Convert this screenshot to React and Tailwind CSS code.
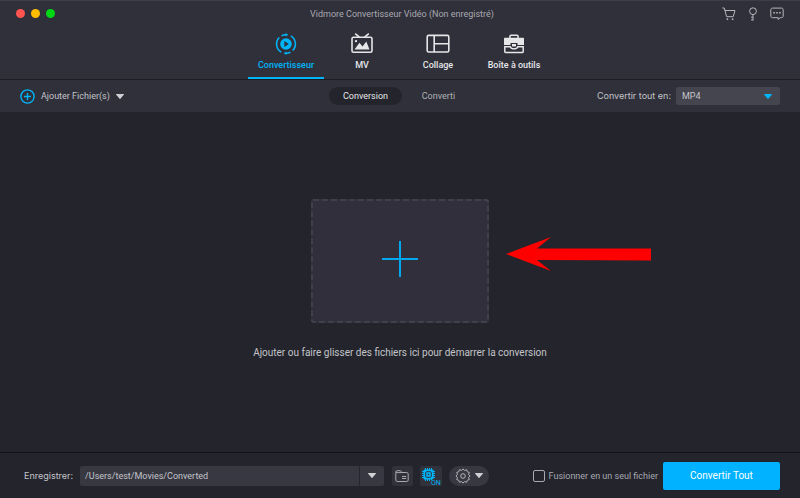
import { useState } from 'react'

function CartIcon() {
  return (
    <svg className="h-[14px] w-[14px]" viewBox="0 0 14 14" fill="none" stroke="currentColor" strokeLinecap="round" strokeLinejoin="round">
      <path d="M.7 1h1.600l2.300 8.700h6.600l1.800-6.200H3" />
      <circle cx="5.400" cy="12.200" r=".9" fill="currentColor" stroke="none" />
      <circle cx="10.600" cy="12.200" r=".9" fill="currentColor" stroke="none" />
    </svg>
  )
}

function KeyIcon() {
  return (
    <svg className="h-[14px] w-[10px]" viewBox="0 0 10 14" fill="none" stroke="currentColor">
      <circle cx="5" cy="4.200" r="3.400" />
      <path d="M5 7.600v6M5 10.200H3M5 12.900H3" />
    </svg>
  )
}

function MessageIcon() {
  return (
    <svg className="h-[14px] w-[14px]" viewBox="0 0 14 14" fill="none" stroke="currentColor">
      <path d="M2.400 1.100h9.200c.9 0 1.600.7 1.600 1.600v6.400c0 .9-.7 1.600-1.600 1.600h-1.300l-2.100 1.700v-1.700H2.400C1.500 10.700.8 10 .8 9.100V2.700c0-.9.7-1.600 1.600-1.600z" />
      <path d="M3.300 5.800h1.600M6.200 5.800h1.600M9.100 5.800h1.600" strokeWidth="1.600" />
    </svg>
  )
}

function ConvertIcon() {
  return (
    <svg className="h-[22px] w-[22px]" viewBox="0 0 22 22" fill="none" stroke="currentColor" strokeWidth="1.600">
      <path d="M4.300 4.500A9.300 9.300 0 0 0 6.200 19.100" />
      <path d="M15.800 2.900A9.300 9.300 0 0 1 17.700 17.500" />
      <path d="M6.600 2.700A9.300 9.300 0 0 1 11.500 1.700M15.400 19.300A9.300 9.300 0 0 1 10.500 20.300" />
      <path d="M10.600 0l2.700 1.800-2.700 1.800zM11.400 18.400l-2.700 1.800 2.700 1.800z" fill="currentColor" stroke="none" />
      <circle cx="11" cy="11" r="5.800" fill="currentColor" stroke="none" />
      <path d="M9.300 8.100v5.800l4.600-2.900z" fill="#2f303a" stroke="none" />
    </svg>
  )
}

function TvIcon() {
  return (
    <svg className="h-[22px] w-[22px]" viewBox="0 0 22 22" fill="none" stroke="currentColor" strokeWidth="1.600">
      <path d="M4.200 .6l4.200 3.600M17.800 .6l-4.200 3.600" />
      <rect x="1" y="4.200" width="20" height="15" rx="1.500" />
      <path d="M3.500 16.500l5-6.700 3 3.700 3.800-5.100 3.200 8.100z" fill="currentColor" stroke="none" />
      <circle cx="5" cy="8.100" r="1.200" fill="currentColor" stroke="none" />
    </svg>
  )
}

function CollageIcon() {
  return (
    <svg className="h-[22px] w-[24px]" viewBox="0 0 24 22" fill="none" stroke="currentColor" strokeWidth="1.600">
      <rect x="1.200" y="2.400" width="21.600" height="16.600" rx="1.500" />
      <path d="M8.200 2.400V19M8.200 10.700h14.600" />
    </svg>
  )
}

function ToolboxIcon() {
  return (
    <svg className="h-[22px] w-[22px]" viewBox="0 0 22 22" fill="currentColor">
      <path d="M6.900 5V3.400c0-.7.500-1.200 1.200-1.200h5.800c.7 0 1.200.5 1.200 1.200V5" fill="none" stroke="currentColor" strokeWidth="1.500" />
      <path d="M2 4.800h18c.6 0 1 .4 1 1v6.200h-6.500V10H7.500v2H1V5.800c0-.6.400-1 1-1z" />
      <path d="M9 11h4v1.700c0 .5-.4.900-.9.900H9.900c-.5 0-.9-.4-.9-.9z" />
      <path d="M1.800 13.800v5c0 .4.300.7.700.7h17c.4 0 .7-.3.700-.7v-5h-5.500c-.3 1.200-1.200 1.900-2.300 1.900H9.600c-1.100 0-2-.7-2.300-1.900z" fill="none" stroke="currentColor" strokeWidth="1.500" />
    </svg>
  )
}

function FolderIcon() {
  return (
    <svg className="h-[14px] w-[14px]" viewBox="0 0 14 14" fill="none" stroke="currentColor">
      <path d="M.8 3.600V3c0-.8.500-1.300 1.300-1.300h3c.5 0 .8.200 1 .6l.6 1.200h5.100c.8 0 1.400.6 1.400 1.400v6.200c0 .8-.6 1.400-1.400 1.400H2.200c-.8 0-1.400-.6-1.400-1.400z" />
      <path d="M1 3.600h6M7 7.500h4.200M7 9.500h4.200" />
    </svg>
  )
}

function ChipIcon() {
  return (
    <svg className="h-[20px] w-[20px]" viewBox="0 0 20 20" fill="none" stroke="currentColor">
      <path d="M4.500 2v13M6.500 2v13M8.500 2v13M10.500 2v13M1 5.500h13M1 7.500h13M1 9.500h13M1 11.500h13" />
      <rect x="2.500" y="3.500" width="10" height="10" rx="1" fill="currentColor" stroke="none" />
      <rect x="4.700" y="5.700" width="5.600" height="5.600" rx="1" stroke="#31323c" />
      <rect x="6.800" y="7.800" width="1.400" height="1.400" fill="#31323c" stroke="none" />
      <text x="10" y="18.500" fill="currentColor" stroke="#31323c" strokeWidth="1" paintOrder="stroke" fontSize="7" fontFamily="Roboto, sans-serif">ON</text>
    </svg>
  )
}

function GearIcon() {
  return (
    <svg className="h-[16px] w-[16px]" viewBox="0 0 16 16" fill="none" stroke="currentColor" strokeLinejoin="round">
      <path d="M8 .9l1.500 1.600 2-.8.8 2 2 .8-.8 2L15.100 8l-1.600 1.500.8 2-2 .8-.8 2-2-.8L8 15.100l-1.500-1.600-2 .8-.8-2-2-.8.8-2L.9 8l1.600-1.500-.8-2 2-.8.8-2 2 .8z" />
      <circle cx="8" cy="8" r="2.300" />
    </svg>
  )
}

function Caret({ className }) {
  return (
    <svg className={`h-[5px] w-[8px] ${className}`} viewBox="0 0 8 5" fill="currentColor">
      <path d="M.5 0h7c.4 0 .6.400.3.700L4.400 4.700c-.2.300-.6.300-.8 0L.2.700C-.1.400.1 0 .5 0z" />
    </svg>
  )
}

const tabs = [
  { id: 'convert', label: 'Convertisseur', icon: ConvertIcon },
  { id: 'mv', label: 'MV', icon: TvIcon },
  { id: 'collage', label: 'Collage', icon: CollageIcon },
  { id: 'toolbox', label: 'Boîte à outils', icon: ToolboxIcon }
]

const views = [
  { id: 'conversion', label: 'Conversion' },
  { id: 'converted', label: 'Converti' }
]

export default function App() {
  const [activeTab, setActiveTab] = useState('convert')
  const [activeView, setActiveView] = useState('conversion')
  const [format, setFormat] = useState('MP4')
  const [path, setPath] = useState('/Users/test/Movies/Converted')
  const [merge, setMerge] = useState(false)

  return (
    <div className="flex min-h-screen flex-col bg-[#23242c] font-['Roboto',sans-serif] text-[9px] leading-3 text-[#c4c4c9]">
      {/* Title bar */}
      <header className="border-b border-[#1d1d24] bg-[#2f303a]">
        <div className="grid h-[26px] grid-cols-[1fr_auto_1fr] items-center border-t border-[#3c3d47] px-4">
          <div className="flex gap-[6px]">
            <span className="h-[9px] w-[9px] rounded-full bg-[#ff5450]" />
            <span className="h-[9px] w-[9px] rounded-full bg-[#ffbd00]" />
            <span className="h-[9px] w-[9px] rounded-full bg-[#00d713]" />
          </div>
          <h1 className="pl-1 text-[#a9a9b0]">Vidmore Convertisseur Vidéo (Non enregistré)</h1>
          <div className="flex items-center justify-end gap-3 text-[#b5b5bc]">
            <button aria-label="Acheter"><CartIcon /></button>
            <button aria-label="Enregistrer la licence"><KeyIcon /></button>
            <button aria-label="Commentaires"><MessageIcon /></button>
          </div>
        </div>

        {/* Main tabs */}
        <nav className="flex justify-center">
          {tabs.map((tab) => (
            <button
              key={tab.id}
              onClick={() => setActiveTab(tab.id)}
              className={`flex h-[53px] w-[76px] flex-col items-center gap-1 border-b-2 pt-[7px] font-medium whitespace-nowrap ${
                activeTab === tab.id ? 'border-[#00b4f8] text-[#00b4f8]' : 'border-transparent text-[#e6e6e9]'
              }`}
            >
              <tab.icon />
              {tab.label}
            </button>
          ))}
        </nav>
      </header>

      {/* Toolbar */}
      <div className="grid h-8 grid-cols-[1fr_auto_1fr] items-center bg-[#2f303a] px-5">
        <button className="flex items-center gap-[6px]">
          <svg className="h-[15px] w-[15px] text-[#00b4f8]" viewBox="0 0 15 15" fill="none" stroke="currentColor" strokeWidth="1.400">
            <circle cx="7.500" cy="7.500" r="6.600" />
            <path d="M7.500 4v7M4 7.500h7" />
          </svg>
          Ajouter Fichier(s)
          <Caret className="text-[#d0d0d4]" />
        </button>
        <div className="flex pl-1">
          {views.map((view) => (
            <button
              key={view.id}
              onClick={() => setActiveView(view.id)}
              className={`h-[18px] w-[73px] rounded-full ${
                activeView === view.id ? 'bg-[#23242c] text-[#e6e6e9]' : 'text-[#b0b0b6]'
              }`}
            >
              {view.label}
            </button>
          ))}
        </div>
        <div className="flex items-center justify-end gap-[5px]">
          <label htmlFor="format" className="font-['Inter',sans-serif]">Convertir tout en:</label>
          <div className="relative">
            <select
              id="format"
              value={format}
              onChange={(e) => setFormat(e.target.value)}
              className="h-[18px] w-[104px] appearance-none rounded-xs bg-[#44454f] px-[6px] text-[#c4c4c9]"
            >
              <option>MP4</option>
              <option>MOV</option>
              <option>MKV</option>
            </select>
            <Caret className="pointer-events-none absolute top-[7px] right-2 text-[#00b4f8]" />
          </div>
        </div>
      </div>

      {/* Drop area */}
      <main className="flex flex-1 flex-col items-center justify-center gap-6 pb-[6px]">
        <div className="relative">
          <button aria-label="Ajouter des fichiers" className="flex h-[124px] w-[178px] items-center justify-center rounded-xs bg-[#302f3b]">
            <svg className="h-full w-full" viewBox="0 0 178 124" fill="none">
              <rect x="1" y="1" width="176" height="122" rx="1" stroke="#51505b" strokeDasharray="6 3" />
              <path d="M89 42v36M71 60h36" stroke="#00a8f0" strokeWidth="2" />
            </svg>
          </button>
          <svg className="absolute top-[37px] left-full ml-[17px] h-[36px] w-[146px]" viewBox="0 0 146 36" fill="#ff0000">
            <path d="M0 18L45 1 31 12.500H145V24.500L31 24 45 35z" />
          </svg>
        </div>
        <p className="text-[10px]">Ajouter ou faire glisser des fichiers ici pour démarrer la conversion</p>
      </main>

      {/* Footer */}
      <footer className="flex h-[46px] items-center border-t border-[#111117] pr-5 pl-6">
        <label htmlFor="path" className="font-['Inter',sans-serif]">Enregistrer:</label>
        <div className="ml-[7px] flex h-5 flex-1 rounded-xs bg-[#373842]">
          <input
            id="path"
            type="text"
            value={path}
            onChange={(e) => setPath(e.target.value)}
            className="min-w-0 flex-1 px-[5px]"
          />
          <button aria-label="Choisir un dossier" className="flex w-[25px] items-center justify-center border-l border-[#25262e] text-[#d0d0d4]">
            <Caret />
          </button>
        </div>
        <button aria-label="Ouvrir le dossier" className="ml-2 flex h-5 w-[21px] items-center justify-center rounded-xs bg-[#31323c] text-[#a9a9b0]">
          <FolderIcon />
        </button>
        <button aria-label="Accélération matérielle" className="ml-[7px] flex h-5 w-[22px] items-center justify-center rounded-xs bg-[#31323c] text-[#00b4f8]">
          <ChipIcon />
        </button>
        <button aria-label="Paramètres" className="ml-[7px] flex h-5 w-10 items-center justify-center gap-1 rounded-full bg-[#373842] text-[#b5b5bc]">
          <GearIcon />
          <Caret className="text-[#d0d0d4]" />
        </button>
        <label className="ml-11 flex items-center gap-1 text-[#a9a9b0]">
          <input
            type="checkbox"
            checked={merge}
            onChange={(e) => setMerge(e.target.checked)}
            className="h-3 w-3 appearance-none rounded-xs border border-[#a9a9b0] checked:bg-[#00b4f8]"
          />
          Fusionner en un seul fichier
        </label>
        <button className="ml-[5px] h-7 w-[117px] rounded-xs bg-[#00b2ff] text-[10px] text-white">Convertir Tout</button>
      </footer>
    </div>
  )
}
